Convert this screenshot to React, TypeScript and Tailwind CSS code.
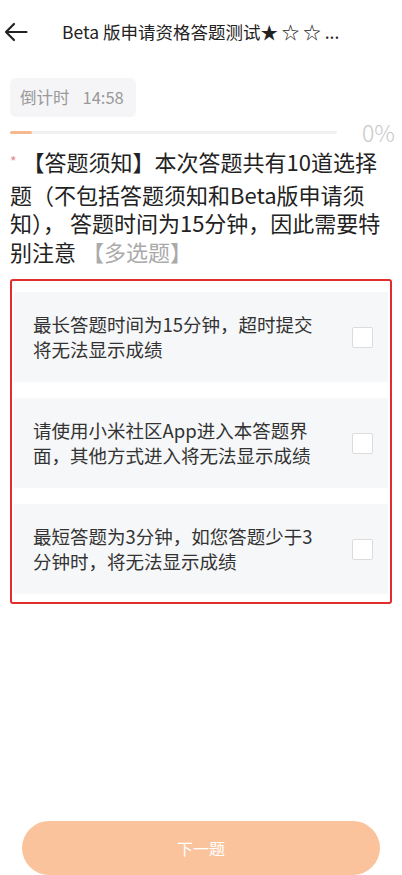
import React from "react";

const font = { fontFamily: '"Noto Sans CJK SC", "Noto Sans", sans-serif' };

function Option({ lines }: { lines: string[] }) {
  return (
    <div className="flex h-[90px] items-center justify-between bg-[#f6f7f9] pl-[19px] pr-[15px]">
      <div className="text-[18.5px] leading-[25px] text-[#333333] whitespace-nowrap">
        {lines.map((l, i) => (
          <div key={i}>{l}</div>
        ))}
      </div>
      <div className="h-[21px] w-[21px] rounded-[2px] border border-[#dcdcdc] bg-white" />
    </div>
  );
}

export default function App() {
  return (
    <div className="flex h-[875px] w-[402px] flex-col bg-white" style={font}>
      <div className="flex h-[64px] items-center">
        <svg width="24" height="20" viewBox="0 0 24 20" className="ml-[4px]" fill="none" stroke="#222" strokeWidth="2.2" strokeLinecap="round" strokeLinejoin="round">
          <path d="M22.5 10H2M10 2L2 10l8 8" />
        </svg>
        <div className="ml-[34px] text-[17.5px] text-[#222222] whitespace-nowrap">Beta 版申请资格答题测试★ ☆ ☆ ...</div>
      </div>

      <div className="mt-[14px] ml-[10px] flex h-[39px] w-[126px] items-center rounded-[6px] bg-[#f5f5f7] pl-[10px] text-[16.5px] text-[#999999]">
        <span>倒计时</span>
        <span className="ml-[13px]">14:58</span>
      </div>

      <div className="flex h-[30px] items-center pl-[10px] pr-[7px]">
        <div className="relative h-[3px] w-[327px] rounded-full bg-[#f0f0f0]">
          <div className="absolute left-0 top-0 h-[3px] w-[22px] rounded-full bg-[#f6b88e]" />
        </div>
        <div className="ml-auto text-[23px] leading-[22px] font-light text-[#c8c8c8]">0%</div>
      </div>

      <div className="px-[10px] text-[22px] leading-[28.5px] text-[#222222] whitespace-nowrap">
        <div>
          <span className="relative -top-[4px] text-[14px] text-[#e88a8a]">*</span>
          <span className="ml-[6px]">【答题须知】本次答题共有10道选择</span>
        </div>
        <div>题（不包括答题须知和Beta版申请须</div>
        <div>知）， 答题时间为15分钟，因此需要特</div>
        <div>
          别注意<span className="ml-[6px] text-[#aaaaaa]">【多选题】</span>
        </div>
      </div>

      <div className="mx-[10px] mt-[14px] flex flex-col gap-[16px] rounded-[3px] border-2 border-[#e02e2e] px-[2px] pt-[11px] pb-[8px]">
        <Option lines={["最长答题时间为15分钟，超时提交", "将无法显示成绩"]} />
        <Option lines={["请使用小米社区App进入本答题界", "面，其他方式进入将无法显示成绩"]} />
        <Option lines={["最短答题为3分钟，如您答题少于3", "分钟时，将无法显示成绩"]} />
      </div>

      <div className="mt-auto mx-[22px] flex h-[54px] items-center justify-center rounded-full bg-[#fbc39c] text-[16px] text-white">
        下一题
      </div>
    </div>
  );
}
